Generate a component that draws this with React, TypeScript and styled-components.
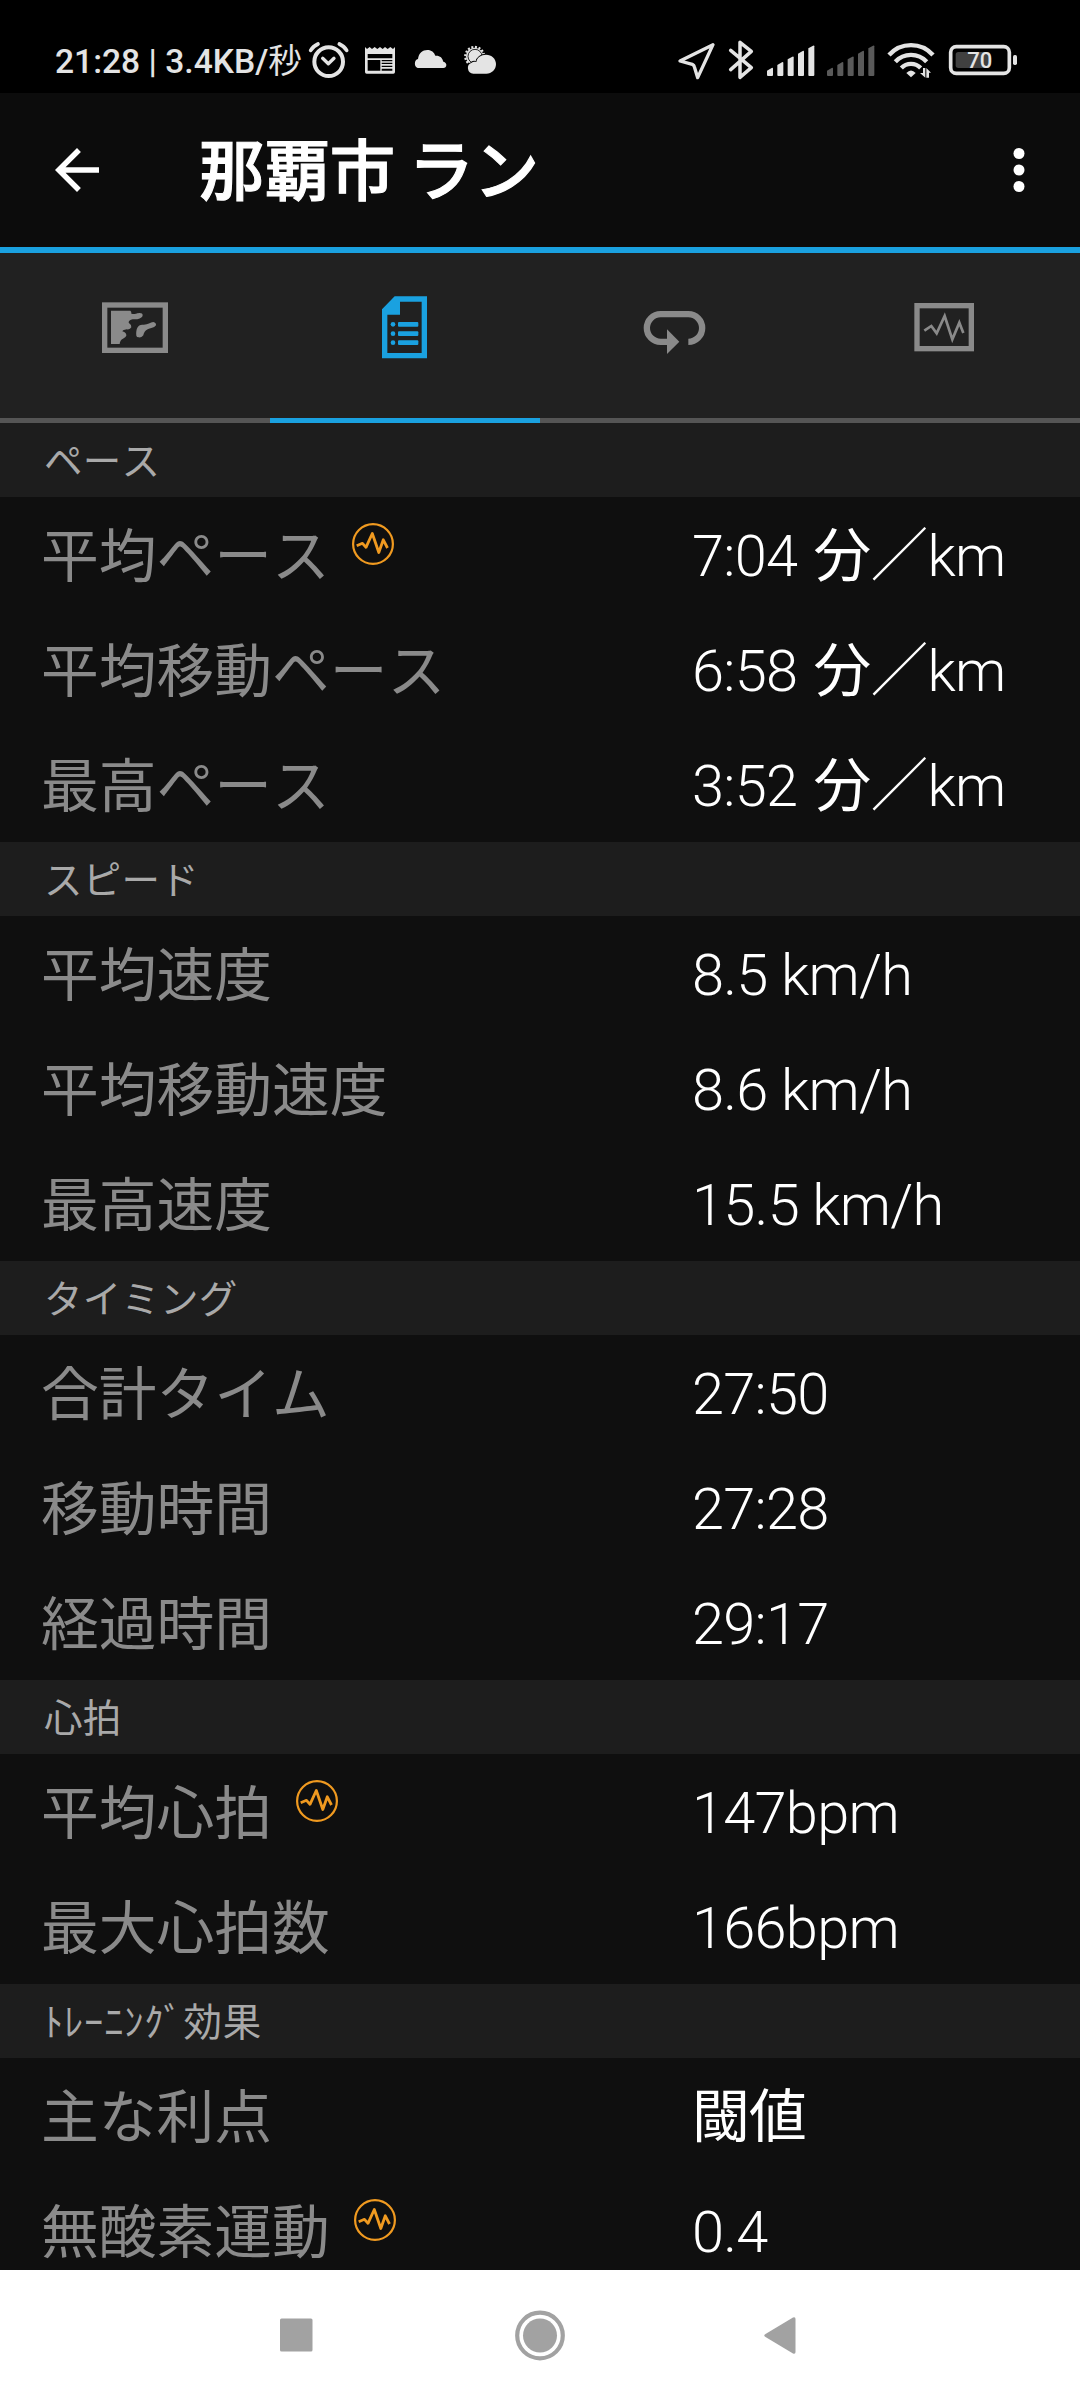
import React from "react";
import styled, { createGlobalStyle } from "styled-components";

const BLUE = "#1aa1e0";
const GREY = "#8a8a8a";

const GlobalStyle = createGlobalStyle`
  html, body { margin: 0; padding: 0; background: #0f0f0f; }
  body { font-family: Roboto, "Noto Sans CJK JP", sans-serif; }
`;

const Screen = styled.div`
  width: 1080px;
  height: 2400px;
  display: flex;
  flex-direction: column;
  overflow: hidden;
  background: #0f0f0f;
`;

const StatusBar = styled.header`
  flex: none;
  height: 57px;
  padding: 36px 62px 0 55px;
  display: flex;
  justify-content: space-between;
  background: #000;
  color: #e4e4e4;
`;

const StatusGroup = styled.div`
  display: flex;
  height: 50px;
`;

const Clock = styled.span`
  width: 253px;
  padding-top: 1px;
  font-size: 33.6px;
  font-weight: 500;
  line-height: 50px;
  white-space: nowrap;
`;

const ClockUnit = styled.span`
  font-weight: 400;
`;

const Glyph = styled.svg<{ $w: number; $gap?: number }>`
  flex: none;
  display: block;
  width: ${(p) => p.$w}px;
  height: 50px;
  margin-left: ${(p) => p.$gap ?? 0}px;
`;

const AppBar = styled.div`
  flex: none;
  height: 154px;
  padding: 0 28px 0 44px;
  display: flex;
  align-items: center;
  background: #0c0c0c;
  border-bottom: 6px solid ${BLUE};
`;

const BarIcon = styled.svg`
  flex: none;
  width: 66px;
  height: 66px;
`;

const Title = styled.h1`
  flex: 1;
  margin: 0 0 0 89px;
  padding-top: 6px;
  font-size: 65.4px;
  line-height: 90px;
  font-weight: 500;
  -webkit-text-stroke: 1.1px #fff;
  word-spacing: -3px;
  color: #fff;
  white-space: nowrap;
`;

const Tabs = styled.nav`
  flex: none;
  display: grid;
  grid-template-columns: repeat(4, 1fr);
  height: 170px;
  background: #212121;
`;

const Tab = styled.div<{ $active?: boolean }>`
  box-sizing: border-box;
  display: flex;
  justify-content: center;
  padding-top: 37px;
  color: ${(p) => (p.$active ? BLUE : GREY)};
  border-bottom: 5px solid ${(p) => (p.$active ? BLUE : "#555")};
`;

const TabIcon = styled.svg`
  width: 90px;
  height: 75px;
`;

const Content = styled.main`
  flex: 1;
  min-height: 0;
  overflow: hidden;
`;

const SectionTitle = styled.h2<{ $tracking?: number }>`
  box-sizing: border-box;
  margin: 0;
  height: 74px;
  padding: 2px 0 0 44px;
  background: #1d1d1d;
  color: #a9a9a9;
  font-size: 38.5px;
  font-weight: 400;
  font-kerning: none;
  letter-spacing: ${(p) => p.$tracking ?? 0.2}px;
  line-height: 74px;
`;

const Row = styled.div`
  display: grid;
  grid-template-columns: 651px 1fr;
  height: 115px;
  padding-left: 41px;
  font-size: 57.75px;
  white-space: nowrap;
`;

const Label = styled.div`
  display: flex;
  color: ${GREY};
  line-height: 121px;
  font-kerning: none;
`;

const Badge = styled.svg<{ $gap: number }>`
  width: 42px;
  height: 42px;
  margin: 26px 0 0 ${(p) => p.$gap}px;
`;

const Value = styled.div`
  color: #fff;
  font-weight: 300;
  line-height: 118px;
  letter-spacing: -0.75px;
`;

const Kanji = styled.span`
  font-weight: 400;
`;

const Unit = styled.span`
  margin-left: 3px;
`;

const NavBar = styled.footer`
  flex: none;
  height: 130px;
  display: flex;
  justify-content: center;
  align-items: center;
  gap: 184px;
  background: #fff;
`;

const NavIcon = styled.svg`
  width: 60px;
  height: 60px;
  fill: #a2a2a2;
`;

const Alarm = () => (
  <Glyph $w={42} viewBox="24 0 126 150" fill="none" stroke="#e4e4e4" strokeLinecap="round" strokeLinejoin="round">
    <circle cx="86" cy="77" r="43" strokeWidth="12" />
    <path d="M68 67 85 83 102 67" strokeWidth="10" />
    <path d="M32 43Q39 31 54 24M140 43Q133 31 118 24" strokeWidth="11" />
  </Glyph>
);

const News = () => (
  <Glyph $w={32} $gap={14} viewBox="192 0 96 150" fill="#e4e4e4">
    <path
      fillRule="evenodd"
      d="M195 33l6 6 8-6 7 6 8-6 8 6 8-6 8 6 7-6 8 6 8-6 8 6 6-6V108q0 5-5 5H200q-5 0-5-5zM203 54V67H277V54zM203 72V104H241V72zM245 72V76H277V72zM245 80V84H277V80zM245 89V93H277V89zM245 98V104H277V98z"
    />
  </Glyph>
);

const Cloud = () => (
  <Glyph $w={34} $gap={17} viewBox="339 0 102 150" fill="#e4e4e4">
    <path d="M353 96a12 14 0 0 1 1-27C356 51 368 42 382 42c13 0 20 7 24 17 14-1 21 6 24 18 7 2 9 6 9 10 0 6-4 9-9 9z" />
  </Glyph>
);

const SunCloud = () => (
  <Glyph $w={34} $gap={16} viewBox="489 0 102 150">
    <circle cx="524" cy="61" r="28" fill="none" stroke="#e4e4e4" strokeWidth="7" strokeDasharray="6 5" />
    <circle cx="524" cy="61" r="26" fill="#e4e4e4" />
    <circle cx="525" cy="61" r="21" fill="#e4e4e4" stroke="#000" strokeWidth="2.5" />
    <path
      d="M520 113a17 17 0 0 1-5-33c3-3 9-4 14-2 2-13 14-22 29-22 17 0 30 12 30 28 0 17-13 29-29 29z"
      fill="#e4e4e4"
      stroke="#000"
      strokeWidth="5"
      paintOrder="stroke"
    />
  </Glyph>
);

const LocationArrow = () => (
  <Glyph $w={39} viewBox="21 0 117 150" fill="none" stroke="#e4e4e4" strokeWidth="10" strokeLinejoin="round">
    <path d="M129 26 30 75 67 85Q72 87 73 92L83 125Z" />
  </Glyph>
);

const Bluetooth = () => (
  <Glyph $w={26} $gap={12} viewBox="174 0 78 150" fill="none" stroke="#e4e4e4" strokeWidth="10.5" strokeLinejoin="round" strokeLinecap="round">
    <path d="M182 43 244 95 210 124V19L244 46 182 101" />
  </Glyph>
);

const Signal = ({ color, gap }: { color: string; gap: number }) => (
  <Glyph $w={50} $gap={gap} viewBox="288 0 150 150" fill={color}>
    {[96, 79, 62, 45, 29].map((top, i) => {
      const x = 291 + i * 31;
      return <path key={top} d={`M${x} ${top + 8}L${x + 14} ${top}q4-2 4 2V117q0 3-3 3H${x + 3}q-3 0-3-3z`} />;
    })}
  </Glyph>
);

const Wifi = () => (
  <Glyph $w={48} $gap={11} viewBox="651 0 144 150" fill="none" stroke="#e4e4e4" strokeWidth="13">
    <path d="M657 57A88 88 0 0 1 789 57M676 77A64 64 0 0 1 770 77M694 96A40 40 0 0 1 752 96" />
    <path d="M709 111Q723 96 737 111L723 124Z" fill="#e4e4e4" stroke="none" />
    <path d="M766 96V125L750 111H759V96zM769 125V96L783 110H777V125z" fill="#e4e4e4" stroke="none" />
  </Glyph>
);

const Battery = () => (
  <Glyph $w={70} $gap={13} viewBox="834 0 210 150">
    <rect x="842" y="32" width="176" height="80" rx="17" fill="none" stroke="#e4e4e4" strokeWidth="11" />
    <rect x="857" y="48" width="104" height="48" rx="8" fill="#404040" />
    <rect x="1029" y="57" width="12" height="30" rx="5" fill="#e4e4e4" />
    <text x="929" y="97" textAnchor="middle" fontFamily="Roboto" fontWeight="500" fontSize="66" fill="#e4e4e4">
      70
    </text>
  </Glyph>
);

const MapIcon = () => (
  <TabIcon viewBox="0 0 270 225" fill="currentColor">
    <rect x="44" y="45" width="182" height="136" fill="none" stroke="currentColor" strokeWidth="16" />
    <path d="M63 62H121Q125 65 124 71Q136 74 142 70Q158 67 158 76Q158 84 142 88H128Q116 90 116 98Q125 104 124 112Q120 120 110 118Q98 120 97 124Q110 128 109 137Q107 142 99 146Q90 150 89 162H63Z" />
    <path d="M139 137C137 116 144 103 158 104C172 106 180 96 190 96Q199 98 198 106Q194 113 184 114C170 117 162 124 160 136Q155 144 146 142Q140 142 139 137Z" />
  </TabIcon>
);

const DocIcon = () => (
  <TabIcon viewBox="0 0 270 225" fill="currentColor">
    <path fillRule="evenodd" d="M104 19H201V205H66V58ZM120 35V74H82V189H185V35Z" />
    {[103, 131, 158].map((y) => (
      <React.Fragment key={y}>
        <circle cx="99" cy={y} r="7" />
        <rect x="114" y={y - 7} width="61" height="14" rx="3" />
      </React.Fragment>
    ))}
  </TabIcon>
);

const LapIcon = () => (
  <TabIcon viewBox="0 0 270 225">
    <path
      d="M175 155.500a41.500 41.500 0 0 0 0-83H92a41.500 41.500 0 0 0 0 83H115"
      fill="none"
      stroke="currentColor"
      strokeWidth="19"
    />
    <path d="M111 118 148 155 111 192Z" fill="currentColor" />
  </TabIcon>
);

const ChartIcon = () => (
  <TabIcon viewBox="0 0 270 225" fill="none" stroke="currentColor">
    <rect x="51" y="47" width="163" height="129" strokeWidth="16" />
    <path d="M73 122 94 108 110 130 134 78 157 148 178 98 190 129" strokeWidth="8" />
  </TabIcon>
);

const PulseBadge = ({ gap }: { gap: number }) => (
  <Badge $gap={gap} viewBox="0 0 42 42" fill="none" stroke="#f09a20" strokeLinejoin="round">
    <circle cx="21" cy="21" r="19.900" strokeWidth="2.200" />
    <path d="M4.700 22.800 10.500 20.300 14 24.300 20.300 10.500 26.800 29.500 31.300 16.800 35.500 25" strokeWidth="2.800" />
  </Badge>
);

type Item = { label: string; value: React.ReactNode; badge?: number };

const pace = (time: string) => (
  <>
    {time}{" "}
    <Unit>
      <Kanji>分</Kanji>／km
    </Unit>
  </>
);

const sections: { title: string; tracking?: number; items: Item[] }[] = [
  {
    title: "ペース",
    items: [
      { label: "平均ペース", value: pace("7:04"), badge: 22 },
      { label: "平均移動ペース", value: pace("6:58") },
      { label: "最高ペース", value: pace("3:52") },
    ],
  },
  {
    title: "スピード",
    items: [
      { label: "平均速度", value: "8.5 km/h" },
      { label: "平均移動速度", value: "8.6 km/h" },
      { label: "最高速度", value: "15.5 km/h" },
    ],
  },
  {
    title: "タイミング",
    items: [
      { label: "合計タイム", value: "27:50" },
      { label: "移動時間", value: "27:28" },
      { label: "経過時間", value: "29:17" },
    ],
  },
  {
    title: "心拍",
    items: [
      { label: "平均心拍", value: "147bpm", badge: 24 },
      { label: "最大心拍数", value: "166bpm" },
    ],
  },
  {
    title: "ﾄﾚｰﾆﾝｸﾞ効果",
    tracking: 0.8,
    items: [
      { label: "主な利点", value: <Kanji>閾値</Kanji> },
      { label: "無酸素運動", value: "0.4", badge: 24 },
    ],
  },
];

export default function App() {
  return (
    <Screen lang="ja">
      <GlobalStyle />
      <StatusBar>
        <StatusGroup>
          <Clock>
            21:28 | 3.4KB/<ClockUnit>秒</ClockUnit>
          </Clock>
          <Alarm />
          <News />
          <Cloud />
          <SunCloud />
        </StatusGroup>
        <StatusGroup>
          <LocationArrow />
          <Bluetooth />
          <Signal color="#e4e4e4" gap={12} />
          <Signal color="#5a5a5a" gap={10} />
          <Wifi />
          <Battery />
        </StatusGroup>
      </StatusBar>
      <AppBar>
        <BarIcon viewBox="0 0 24 24" fill="#fff">
          <path d="M20 11H7.830l5.590-5.590L12 4l-8 8 8 8 1.410-1.410L7.830 13H20v-2z" />
        </BarIcon>
        <Title>那覇市 ラン</Title>
        <BarIcon viewBox="0 0 24 24" fill="#fff">
          <circle cx="12" cy="6" r="2" />
          <circle cx="12" cy="12" r="2" />
          <circle cx="12" cy="18" r="2" />
        </BarIcon>
      </AppBar>
      <Tabs>
        <Tab>
          <MapIcon />
        </Tab>
        <Tab $active>
          <DocIcon />
        </Tab>
        <Tab>
          <LapIcon />
        </Tab>
        <Tab>
          <ChartIcon />
        </Tab>
      </Tabs>
      <Content>
        {sections.map((section) => (
          <section key={section.title}>
            <SectionTitle $tracking={section.tracking}>{section.title}</SectionTitle>
            {section.items.map((item) => (
              <Row key={item.label}>
                <Label>
                  {item.label}
                  {item.badge && <PulseBadge gap={item.badge} />}
                </Label>
                <Value>{item.value}</Value>
              </Row>
            ))}
          </section>
        ))}
      </Content>
      <NavBar>
        <NavIcon viewBox="0 0 60 60">
          <rect x="14" y="13.500" width="32.500" height="33" rx="1.500" />
        </NavIcon>
        <NavIcon viewBox="0 0 60 60">
          <circle cx="30" cy="30.500" r="22.800" fill="none" stroke="#a2a2a2" strokeWidth="4.200" />
          <circle cx="30" cy="30.500" r="17" />
        </NavIcon>
        <NavIcon viewBox="0 0 60 60">
          <path d="M11.500 29 39 12.500q2.500-1 2.500 1.500V47q0 2.500-2.500 1.500L11.500 32q-2.500-1.500 0-3z" />
        </NavIcon>
      </NavBar>
    </Screen>
  );
}
